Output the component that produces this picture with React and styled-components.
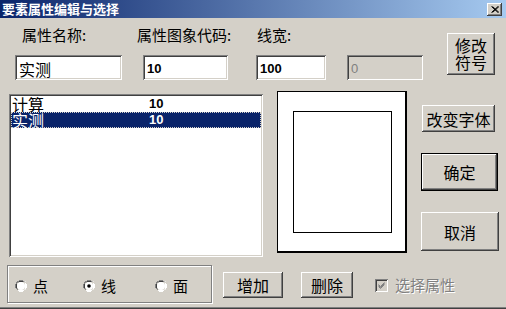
import React from "react";
import styled, { createGlobalStyle, css } from "styled-components";

const GlobalStyle = createGlobalStyle`
  html, body {
    margin: 0;
    padding: 0;
    background: #d4d0c8;
  }
  body {
    font-family: "Noto Sans CJK SC", "Liberation Sans", sans-serif;
    color: #000;
  }
  * {
    box-sizing: border-box;
  }
`;

const raised = css`
  background: #d4d0c8;
  box-shadow: inset -1px -1px #404040, inset 1px 1px #ffffff,
    inset -2px -2px #808080, inset 2px 2px #d4d0c8;
`;

const sunken = css`
  box-shadow: inset 1px 1px #808080, inset -1px -1px #ffffff,
    inset 2px 2px #404040, inset -2px -2px #d4d0c8;
`;

const fields = [
  { label: "属性名称:", value: "实测", w: 107, ml: 0, indent: 7, cjk: true },
  { label: "属性图象代码:", value: "10", w: 85, ml: 21, indent: -6 },
  { label: "线宽:", value: "100", w: 70, ml: 28, indent: 1 },
  { label: "", value: "0", w: 76, ml: 21, indent: 0, disabled: true },
];

const rows = [
  { name: "计算", code: "10" },
  { name: "实测", code: "10", selected: true },
];

const radios = [
  { label: "点", w: 68 },
  { label: "线", w: 72, checked: true },
  { label: "面", w: 50 },
];

const RadioMark = ({ checked }) => (
  <svg width="12" height="12" viewBox="0 0 12 12">
    <path d="M4 0.5h4M2 1.5h2M8 1.5h2M1.5 2v2M0.5 4v4M1.5 8v1" stroke="#808080" />
    <path d="M4 1.5h4M2.5 2.5h1M1.5 4v4M2.5 8.5v1" stroke="#404040" />
    <circle cx="6" cy="6" r="4" fill="#fff" />
    <path d="M10.5 3v6M11.5 4v4M3 10.5h6M4 11.5h4M9.5 9.5h1M9.5 1.5h1" stroke="#fff" />
    {checked && <circle cx="6" cy="6" r="1.8" fill="#000" />}
  </svg>
);

const CheckMark = () => (
  <svg width="7" height="7" viewBox="0 0 7 7">
    <path d="M0.5 2.5 L2.5 4.5 L6.5 0.5 M0.5 3.5 L2.5 5.5 L6.5 1.5 M0.5 4.5 L2.5 6.5 L6.5 2.5" stroke="#808080" strokeWidth="1" fill="none" />
  </svg>
);

const App = () => {
  return (
    <>
      <GlobalStyle />
      <Window>
        <TitleBar>
          <Title>要素属性编辑与选择</Title>
          <CloseButton>
            <svg width="8" height="7" viewBox="0 0 8 7">
              <path d="M0.5 0.5 L7 6.5 M1.5 0.5 L8 6.5 M7 0.5 L0.5 6.5 M8 0.5 L1.5 6.5" stroke="#000" strokeWidth="1" />
            </svg>
          </CloseButton>
        </TitleBar>

        <TopRow>
          {fields.map((f, i) => (
            <Field key={i} $w={f.w} $ml={f.ml}>
              <FieldLabel $indent={f.indent}>{f.label || "\u00a0"}</FieldLabel>
              <TextBox $disabled={f.disabled}>
                <BoxText $cjk={f.cjk} $disabled={f.disabled}>
                  {f.value}
                </BoxText>
              </TextBox>
            </Field>
          ))}
          <ModifyButton>
            修改
            <br />
            符号
          </ModifyButton>
        </TopRow>

        <MiddleRow>
          <ListBox>
            {rows.map((r) => (
              <ListRow key={r.name} $selected={r.selected}>
                <RowName>{r.name}</RowName>
                <RowCode>{r.code}</RowCode>
              </ListRow>
            ))}
          </ListBox>
          <Preview>
            <PreviewFrame />
          </Preview>
          <ButtonColumn>
            <Button $w={73} $h={27} $ml={1}>
              改变字体
            </Button>
            <Button $w={77} $h={38} $default>
              确定
            </Button>
            <Button $w={78} $h={39}>
              取消
            </Button>
          </ButtonColumn>
        </MiddleRow>

        <BottomRow>
          <RadioGroup>
            {radios.map((r) => (
              <RadioItem key={r.label} $w={r.w}>
                <RadioMark checked={r.checked} />
                <RadioLabel>{r.label}</RadioLabel>
              </RadioItem>
            ))}
          </RadioGroup>
          <Button $w={60} $h={26} $ml={11} $mt={7}>
            增加
          </Button>
          <Button $w={52} $h={26} $ml={18} $mt={7}>
            删除
          </Button>
          <CheckItem>
            <CheckBox>
              <CheckMark />
            </CheckBox>
            <DisabledLabel>选择属性</DisabledLabel>
          </CheckItem>
        </BottomRow>
      </Window>
    </>
  );
};

const Window = styled.div`
  width: 506px;
  height: 309px;
  background: #d4d0c8;
  display: flex;
  flex-direction: column;
  box-shadow: inset 0 -1px #404040, inset 0 -2px #808080;
  overflow: hidden;
`;

const TitleBar = styled.div`
  height: 18px;
  display: flex;
  align-items: center;
  justify-content: space-between;
  padding: 0 4px 0 2px;
  background: linear-gradient(to right, #0a246a, #a6caf0);
`;

const Title = styled.div`
  color: #fff;
  font-size: 13px;
  font-weight: bold;
  line-height: 18px;
`;

const CloseButton = styled.div`
  ${raised};
  width: 15px;
  height: 13px;
  display: flex;
  align-items: center;
  justify-content: center;
  svg {
    display: block;
  }
`;

const TopRow = styled.div`
  height: 73px;
  display: flex;
  align-items: flex-start;
  padding-left: 15px;
`;

const Field = styled.div`
  width: ${(p) => p.$w}px;
  margin-left: ${(p) => p.$ml}px;
  display: flex;
  flex-direction: column;
`;

const FieldLabel = styled.div`
  margin-top: 9px;
  margin-left: ${(p) => p.$indent}px;
  font-size: 15px;
  line-height: 16px;
  white-space: nowrap;
`;

const TextBox = styled.div`
  ${sunken};
  margin-top: 12px;
  height: 25px;
  padding: 2px 0 0 4px;
  display: flex;
  align-items: center;
  background: ${(p) => (p.$disabled ? "#d4d0c8" : "#fff")};
`;

const BoxText = styled.span`
  font-family: ${(p) =>
    p.$cjk ? '"Noto Sans CJK SC", sans-serif' : '"Liberation Sans", Arial, sans-serif'};
  font-size: ${(p) => (p.$cjk ? "16px" : "13px")};
  font-weight: ${(p) => (p.$cjk || p.$disabled ? "normal" : "bold")};
  color: ${(p) => (p.$disabled ? "#808080" : "#000")};
  line-height: 16px;
`;

const ModifyButton = styled.div`
  ${raised};
  width: 48px;
  height: 42px;
  margin-top: 15px;
  margin-left: 24px;
  display: flex;
  align-items: center;
  justify-content: center;
  text-align: center;
  font-size: 16px;
  line-height: 17px;
`;

const MiddleRow = styled.div`
  height: 166px;
  display: flex;
  align-items: flex-start;
  padding-left: 9px;
`;

const ListBox = styled.div`
  ${sunken};
  width: 254px;
  height: 163px;
  margin-top: 3px;
  padding: 2px;
  background: #fff;
`;

const ListRow = styled.div`
  display: grid;
  grid-template-columns: 138px 1fr;
  height: 16px;
  align-items: center;
  background: ${(p) => (p.$selected ? "#0a246a" : "transparent")};
  color: ${(p) => (p.$selected ? "#fff" : "#000")};
  outline: ${(p) => (p.$selected ? "1px dotted #d4d0c8" : "none")};
  outline-offset: -1px;
`;

const RowName = styled.span`
  padding-left: 1px;
  font-size: 16px;
  line-height: 16px;
`;

const RowCode = styled.span`
  font-family: "Liberation Sans", Arial, sans-serif;
  font-size: 13px;
  font-weight: bold;
  line-height: 16px;
`;

const Preview = styled.div`
  width: 130px;
  height: 162px;
  margin-left: 14px;
  background: #fff;
  border: 1px solid #000;
  border-right-width: 2px;
  border-bottom-width: 2px;
  padding: 19px 0 0 15px;
`;

const PreviewFrame = styled.div`
  width: 99px;
  height: 122px;
  border: 1px solid #000;
`;

const ButtonColumn = styled.div`
  display: flex;
  flex-direction: column;
  align-items: flex-start;
  gap: 21px;
  margin-left: 14px;
  padding-top: 14px;
`;

const Button = styled.div`
  ${raised};
  width: ${(p) => p.$w}px;
  height: ${(p) => p.$h}px;
  margin-left: ${(p) => p.$ml || 0}px;
  margin-top: ${(p) => p.$mt || 0}px;
  display: flex;
  align-items: center;
  justify-content: center;
  font-size: 16px;
  line-height: 16px;
  flex-shrink: 0;
  ${(p) =>
    p.$default &&
    css`
      border: 1px solid #000;
    `}
`;

const BottomRow = styled.div`
  display: flex;
  align-items: flex-start;
  padding-left: 7px;
  margin-top: 8px;
`;

const RadioGroup = styled.div`
  width: 205px;
  height: 38px;
  border: 1px solid #808080;
  box-shadow: inset 1px 1px #fff, 1px 1px #fff;
  display: flex;
  align-items: center;
  padding: 3px 0 0 7px;
`;

const RadioItem = styled.div`
  width: ${(p) => p.$w}px;
  display: flex;
  align-items: center;
  svg {
    display: block;
    flex-shrink: 0;
  }
`;

const RadioLabel = styled.span`
  margin-left: 6px;
  font-size: 15px;
  line-height: 16px;
`;

const CheckItem = styled.div`
  display: flex;
  align-items: center;
  margin-left: 22px;
  margin-top: 12px;
`;

const CheckBox = styled.div`
  ${sunken};
  width: 13px;
  height: 13px;
  background: #d4d0c8;
  display: flex;
  align-items: center;
  justify-content: center;
  svg {
    display: block;
  }
`;

const DisabledLabel = styled.span`
  margin-left: 7px;
  font-size: 15px;
  line-height: 16px;
  color: #808080;
  text-shadow: 1px 1px #fff;
`;

export default App;
